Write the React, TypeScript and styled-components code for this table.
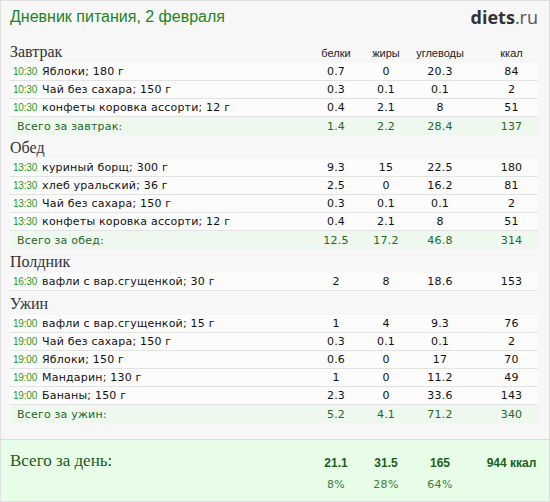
import styled, { createGlobalStyle } from "styled-components";

interface Entry {
  time: string;
  name: string;
  p: string;
  f: string;
  c: string;
  k: string;
}

interface Meal {
  title: string;
  items: Entry[];
  total?: { label: string; p: string; f: string; c: string; k: string };
}

const meals: Meal[] = [
  {
    title: "Завтрак",
    items: [
      { time: "10:30", name: "Яблоки; 180 г", p: "0.7", f: "0", c: "20.3", k: "84" },
      { time: "10:30", name: "Чай без сахара; 150 г", p: "0.3", f: "0.1", c: "0.1", k: "2" },
      { time: "10:30", name: "конфеты коровка ассорти; 12 г", p: "0.4", f: "2.1", c: "8", k: "51" },
    ],
    total: { label: "Всего за завтрак:", p: "1.4", f: "2.2", c: "28.4", k: "137" },
  },
  {
    title: "Обед",
    items: [
      { time: "13:30", name: "куриный борщ; 300 г", p: "9.3", f: "15", c: "22.5", k: "180" },
      { time: "13:30", name: "хлеб уральский; 36 г", p: "2.5", f: "0", c: "16.2", k: "81" },
      { time: "13:30", name: "Чай без сахара; 150 г", p: "0.3", f: "0.1", c: "0.1", k: "2" },
      { time: "13:30", name: "конфеты коровка ассорти; 12 г", p: "0.4", f: "2.1", c: "8", k: "51" },
    ],
    total: { label: "Всего за обед:", p: "12.5", f: "17.2", c: "46.8", k: "314" },
  },
  {
    title: "Полдник",
    items: [
      { time: "16:30", name: "вафли с вар.сгущенкой; 30 г", p: "2", f: "8", c: "18.6", k: "153" },
    ],
  },
  {
    title: "Ужин",
    items: [
      { time: "19:00", name: "вафли с вар.сгущенкой; 15 г", p: "1", f: "4", c: "9.3", k: "76" },
      { time: "19:00", name: "Чай без сахара; 150 г", p: "0.3", f: "0.1", c: "0.1", k: "2" },
      { time: "19:00", name: "Яблоки; 150 г", p: "0.6", f: "0", c: "17", k: "70" },
      { time: "19:00", name: "Мандарин; 130 г", p: "1", f: "0", c: "11.2", k: "49" },
      { time: "19:00", name: "Бананы; 150 г", p: "2.3", f: "0", c: "33.6", k: "143" },
    ],
    total: { label: "Всего за ужин:", p: "5.2", f: "4.1", c: "71.2", k: "340" },
  },
];

const GlobalStyle = createGlobalStyle`
  html, body {
    margin: 0;
    padding: 0;
    background: #ffffff;
  }
  * {
    box-sizing: border-box;
  }
`;

// name | белки | жиры | углеводы | spacer | ккал
const COLS = "1fr 50px 50px 58px 16px 53px";

const Page = styled.div`
  width: 550px;
  height: 502px;
  border: 1px solid #e0e0e0;
  background: #f7f7f7;
  display: flex;
  flex-direction: column;
  font-family: "DejaVu Sans", Verdana, sans-serif;
`;

const Header = styled.div`
  height: 38px;
  display: flex;
  justify-content: space-between;
  align-items: flex-start;
  padding: 5px 11px 0 9px;
`;

const Title = styled.h1`
  margin: 0;
  padding-top: 2px;
  font-family: "Liberation Sans", Arial, sans-serif;
  font-weight: normal;
  font-size: 16px;
  color: #1b861b;
`;

const Logo = styled.div`
  font-family: "Open Sans", sans-serif;
  font-size: 18px;
  line-height: 22px;
  color: #333;
  b {
    font-weight: 700;
  }
  span {
    color: #555;
    font-weight: 400;
  }
`;

const Content = styled.div`
  padding: 0 11px 0 9px;
`;

const HeadingRow = styled.div`
  height: 24px;
  display: grid;
  grid-template-columns: ${COLS};
  align-items: end;
  padding-bottom: 2px;
`;

const MealTitle = styled.div`
  font-family: "Liberation Serif", "Times New Roman", serif;
  font-size: 16px;
  line-height: 18px;
  color: #333;
`;

const ColLabel = styled.div<{ $col: number }>`
  grid-column: ${(p) => p.$col};
  text-align: center;
  font-family: "Liberation Sans", Arial, sans-serif;
  font-size: 11px;
  line-height: 16px;
  color: #222;
`;

const Row = styled.div<{ $total?: boolean }>`
  height: 18px;
  display: grid;
  grid-template-columns: ${COLS};
  align-items: center;
  background: ${(p) => (p.$total ? "#eef8ee" : "#fcfcfc")};
  border-bottom: ${(p) => (p.$total ? "none" : "1px solid #e3e3e3")};
  font-size: 11px;
  color: ${(p) => (p.$total ? "#23692a" : "#111")};
  letter-spacing: 0.2px;
`;

const NameCell = styled.div<{ $total?: boolean }>`
  display: flex;
  align-items: center;
  gap: 5px;
  padding-left: ${(p) => (p.$total ? "7px" : "3px")};
  white-space: nowrap;
`;

const Time = styled.span`
  font-family: "Liberation Sans", Arial, sans-serif;
  font-size: 10px;
  letter-spacing: -0.2px;
  color: #1d9a1d;
`;

const Num = styled.div<{ $col?: number }>`
  text-align: center;
  ${(p) => (p.$col ? `grid-column: ${p.$col};` : "")}
`;

const DayTotal = styled.div`
  margin-top: auto;
  height: 62px;
  border-top: 1px solid #dcdcdc;
  background: #e8fde8;
  padding: 12px 11px 0 9px;
  display: grid;
  grid-template-columns: ${COLS};
  grid-template-rows: 22px 20px;
  align-items: center;
`;

const DayLabel = styled.div`
  margin-top: -4px;
  font-family: "Liberation Serif", "Times New Roman", serif;
  font-size: 17px;
  color: #1a5a1a;
`;

const DayValue = styled.div<{ $col: number }>`
  grid-column: ${(p) => p.$col};
  text-align: center;
  white-space: nowrap;
  font-family: "Liberation Sans", Arial, sans-serif;
  font-weight: bold;
  font-size: 12px;
  color: #1c5e1c;
`;

const Percent = styled.div<{ $col: number }>`
  grid-row: 2;
  grid-column: ${(p) => p.$col};
  text-align: center;
  font-size: 11px;
  letter-spacing: 0.3px;
  color: #3a7e3a;
`;

function MealBlock({ meal, first }: { meal: Meal; first: boolean }) {
  return (
    <>
      <HeadingRow>
        <MealTitle>{meal.title}</MealTitle>
        {first && (
          <>
            <ColLabel $col={2}>белки</ColLabel>
            <ColLabel $col={3}>жиры</ColLabel>
            <ColLabel $col={4}>углеводы</ColLabel>
            <ColLabel $col={6}>ккал</ColLabel>
          </>
        )}
      </HeadingRow>
      {meal.items.map((it, i) => (
        <Row key={i}>
          <NameCell>
            <Time>{it.time}</Time>
            {it.name}
          </NameCell>
          <Num>{it.p}</Num>
          <Num>{it.f}</Num>
          <Num>{it.c}</Num>
          <Num $col={6}>{it.k}</Num>
        </Row>
      ))}
      {meal.total && (
        <Row $total>
          <NameCell $total>{meal.total.label}</NameCell>
          <Num>{meal.total.p}</Num>
          <Num>{meal.total.f}</Num>
          <Num>{meal.total.c}</Num>
          <Num $col={6}>{meal.total.k}</Num>
        </Row>
      )}
    </>
  );
}

export default function App() {
  return (
    <>
      <GlobalStyle />
      <Page>
        <Header>
          <Title>Дневник питания, 2 февраля</Title>
          <Logo>
            <b>diets</b>
            <span>.ru</span>
          </Logo>
        </Header>
        <Content>
          {meals.map((m, i) => (
            <MealBlock key={m.title} meal={m} first={i === 0} />
          ))}
        </Content>
        <DayTotal>
          <DayLabel>Всего за день:</DayLabel>
          <DayValue $col={2}>21.1</DayValue>
          <DayValue $col={3}>31.5</DayValue>
          <DayValue $col={4}>165</DayValue>
          <DayValue $col={6}>944 ккал</DayValue>
          <Percent $col={2}>8%</Percent>
          <Percent $col={3}>28%</Percent>
          <Percent $col={4}>64%</Percent>
        </DayTotal>
      </Page>
    </>
  );
}
